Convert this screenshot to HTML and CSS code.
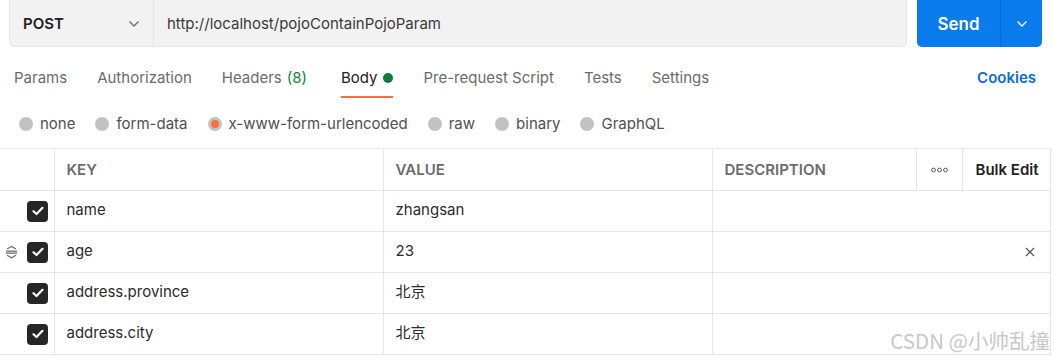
FILE: index.html
```html
<!DOCTYPE html>
<html lang="zh">
<head>
<meta charset="utf-8">
<title>Postman request</title>
<link rel="stylesheet" href="styles.css">
</head>
<body>
<div class="page">
  <div class="topbar">
    <div class="urlbox">
      <div class="method">
        <span class="method-name">POST</span>
        <svg class="chev" width="12" height="8" viewBox="0 0 12 8"><path d="M1.5 1.5 L6 6 L10.5 1.5" fill="none" stroke="#6b6b6b" stroke-width="1.3"/></svg>
      </div>
      <div class="url">http://localhost/pojoContainPojoParam</div>
    </div>
    <div class="send">
      <span class="send-label">Send</span>
      <span class="send-more"><svg width="12" height="8" viewBox="0 0 12 8"><path d="M1.5 1.5 L6 6 L10.5 1.5" fill="none" stroke="#fff" stroke-width="1.4"/></svg></span>
    </div>
  </div>

  <nav class="tabs">
    <span class="tab">Params</span>
    <span class="tab">Authorization</span>
    <span class="tab headers">Headers <span class="count">(8)</span></span>
    <span class="tab active">Body <span class="dot"></span></span>
    <span class="tab">Pre-request Script</span>
    <span class="tab">Tests</span>
    <span class="tab">Settings</span>
    <span class="cookies">Cookies</span>
  </nav>

  <div class="radios">
    <label class="radio"><span class="circle"></span>none</label>
    <label class="radio"><span class="circle"></span>form-data</label>
    <label class="radio"><span class="circle checked"></span>x-www-form-urlencoded</label>
    <label class="radio"><span class="circle"></span>raw</label>
    <label class="radio"><span class="circle"></span>binary</label>
    <label class="radio"><span class="circle"></span>GraphQL</label>
  </div>

  <table class="params">
    <colgroup>
      <col class="c-check"><col class="c-key"><col class="c-val"><col class="c-desc"><col class="c-more"><col class="c-bulk">
    </colgroup>
    <thead>
      <tr>
        <th></th>
        <th>KEY</th>
        <th>VALUE</th>
        <th>DESCRIPTION</th>
        <th class="more"><svg width="17" height="6" viewBox="0 0 17 6"><circle cx="2.5" cy="3" r="1.9" fill="none" stroke="#555" stroke-width="1"/><circle cx="8.5" cy="3" r="1.9" fill="none" stroke="#555" stroke-width="1"/><circle cx="14.5" cy="3" r="1.9" fill="none" stroke="#555" stroke-width="1"/></svg></th>
        <th class="bulk">Bulk Edit</th>
      </tr>
    </thead>
    <tbody>
      <tr>
        <td class="check"><div class="checkcell"><span class="handle hidden"></span><span class="box"><svg width="12" height="10" viewBox="0 0 12 10"><path d="M1.5 5.2 L4.5 8 L10.5 1.8" fill="none" stroke="#fff" stroke-width="2.2" stroke-linecap="round" stroke-linejoin="round"/></svg></span></div></td>
        <td>name</td>
        <td>zhangsan</td>
        <td colspan="3"></td>
      </tr>
      <tr>
        <td class="check"><div class="checkcell"><span class="handle"><svg width="13" height="14" viewBox="0 0 13 14"><path d="M2 4 L6.5 1.5 L11 4 M1 6.2 H12 M1 8.2 H12 M2 10.2 L6.5 12.7 L11 10.2" fill="none" stroke="#6b6b6b" stroke-width="1.2"/></svg></span><span class="box"><svg width="12" height="10" viewBox="0 0 12 10"><path d="M1.5 5.2 L4.5 8 L10.5 1.8" fill="none" stroke="#fff" stroke-width="2.2" stroke-linecap="round" stroke-linejoin="round"/></svg></span></div></td>
        <td>age</td>
        <td>23</td>
        <td colspan="3" class="desc-x"><svg width="10" height="10" viewBox="0 0 10 10"><path d="M1 1 L9 9 M9 1 L1 9" stroke="#555" stroke-width="1.2"/></svg></td>
      </tr>
      <tr>
        <td class="check"><div class="checkcell"><span class="handle hidden"></span><span class="box"><svg width="12" height="10" viewBox="0 0 12 10"><path d="M1.5 5.2 L4.5 8 L10.5 1.8" fill="none" stroke="#fff" stroke-width="2.2" stroke-linecap="round" stroke-linejoin="round"/></svg></span></div></td>
        <td>address.province</td>
        <td>北京</td>
        <td colspan="3"></td>
      </tr>
      <tr>
        <td class="check"><div class="checkcell"><span class="handle hidden"></span><span class="box"><svg width="12" height="10" viewBox="0 0 12 10"><path d="M1.5 5.2 L4.5 8 L10.5 1.8" fill="none" stroke="#fff" stroke-width="2.2" stroke-linecap="round" stroke-linejoin="round"/></svg></span></div></td>
        <td>address.city</td>
        <td>北京</td>
        <td colspan="3"></td>
      </tr>
    </tbody>
  </table>

  <div class="watermark">CSDN @小帅乱撞</div>
</div>
</body>
</html>
```
FILE: styles.css
```css
* { box-sizing: border-box; }
html, body { margin: 0; padding: 0; background: #fff; overflow: hidden; }
body {
  font-family: Inter, "Noto Sans", "Noto Sans CJK SC", sans-serif;
  font-size: 15px;
  color: #212121;
}
.page { position: relative; width: 1054px; height: 356px; overflow: hidden; }

.topbar {
  display: flex;
  gap: 10px;
  padding-left: 9px;
  margin-top: -5px;
  height: 52px;
}
.urlbox {
  width: 898px;
  display: flex;
  background: #f2f2f2;
  border: 1px solid #e5e5e5;
  border-radius: 5px;
}
.method {
  width: 144px;
  display: flex;
  align-items: center;
  justify-content: space-between;
  padding: 5px 13px 0 13px;
  border-right: 1px solid #e3e3e3;
}
.method-name { font-weight: 600; color: #212121; }
.url {
  display: flex;
  align-items: center;
  padding: 5px 0 0 13px;
  color: #3a3a3a;
}
.send {
  width: 125px;
  display: flex;
  background: #097bed;
  border-radius: 5px;
  color: #fff;
}
.send-label {
  width: 84px;
  display: flex;
  align-items: center;
  justify-content: center;
  padding-top: 5px;
  font-weight: 600;
  font-size: 17px;
  border-right: 1px solid #0a6cd0;
}
.send-more {
  flex: 1;
  display: flex;
  align-items: center;
  justify-content: center;
  padding-top: 5px;
}

.tabs {
  display: flex;
  align-items: flex-end;
  padding-left: 14px;
  padding-right: 18px;
  height: 51px;
}
.tab {
  color: #6b6b6b;
  line-height: 20px;
  padding-bottom: 8px;
  border-bottom: 2px solid transparent;
  margin-right: 30px;
  display: flex;
  align-items: center;
  white-space: nowrap;
}
.tab.headers { margin-right: 34px; }
.tab.active { color: #212121; border-bottom-color: #ff6c37; }
.count { color: #0a8543; margin-left: 5px; }
.dot {
  width: 10px; height: 10px;
  background: #0a7d3b;
  border-radius: 50%;
  margin-left: 6px;
}
.cookies {
  margin-left: auto;
  color: #0b6cd1;
  font-weight: 600;
  line-height: 20px;
  padding-bottom: 10px;
}

.radios {
  display: flex;
  gap: 20px;
  padding: 16px 0 14px 19px;
  line-height: 20px;
}
.radio {
  display: flex;
  align-items: center;
  gap: 7px;
  color: #505050;
}
.circle {
  width: 14px; height: 14px;
  border-radius: 50%;
  background: #c2c2c2;
}
.circle.checked {
  background: #ff6c37;
  border: 3px solid #c2c2c2;
}

.params {
  width: 1050px;
  border-collapse: collapse;
  table-layout: fixed;
}
.c-check { width: 54px; }
.c-key { width: 329px; }
.c-val { width: 329px; }
.c-desc { width: 204px; }
.c-more { width: 46px; }
.c-bulk { width: 88px; }
.params th, .params td {
  border: 1px solid #e6e6e6;
  padding: 0 0 0 12px;
  text-align: left;
  vertical-align: middle;
  line-height: 20px;
}
.params tr > :first-child { border-left: none; }
.params th {
  height: 42px;
  font-weight: 600;
  color: #6b6b6b;
}
.params td { height: 41px; color: #2b2b2b; padding-bottom: 2px; }
.params th.more { padding: 0; text-align: center; }
.params th.more svg { display: inline-block; vertical-align: middle; }
.params th.bulk { color: #212121; padding-left: 13px; }
.params td.check { padding: 0; }
.checkcell {
  display: flex;
  align-items: center;
  gap: 9px;
  padding-left: 5px;
}
.handle { width: 13px; height: 14px; display: flex; }
.handle.hidden { visibility: hidden; }
.box {
  width: 21px; height: 21px;
  background: #262626;
  border-radius: 4px;
  display: flex;
  align-items: center;
  justify-content: center;
}
.params td.desc-x { text-align: right; padding-right: 15px; }
.desc-x svg { display: inline-block; vertical-align: middle; }

.watermark {
  position: absolute;
  right: 4px;
  bottom: 4px;
  font-family: "Noto Sans CJK SC", "Liberation Sans", sans-serif;
  font-size: 20.5px;
  color: #c8c8c8;
  line-height: 24px;
}
```
